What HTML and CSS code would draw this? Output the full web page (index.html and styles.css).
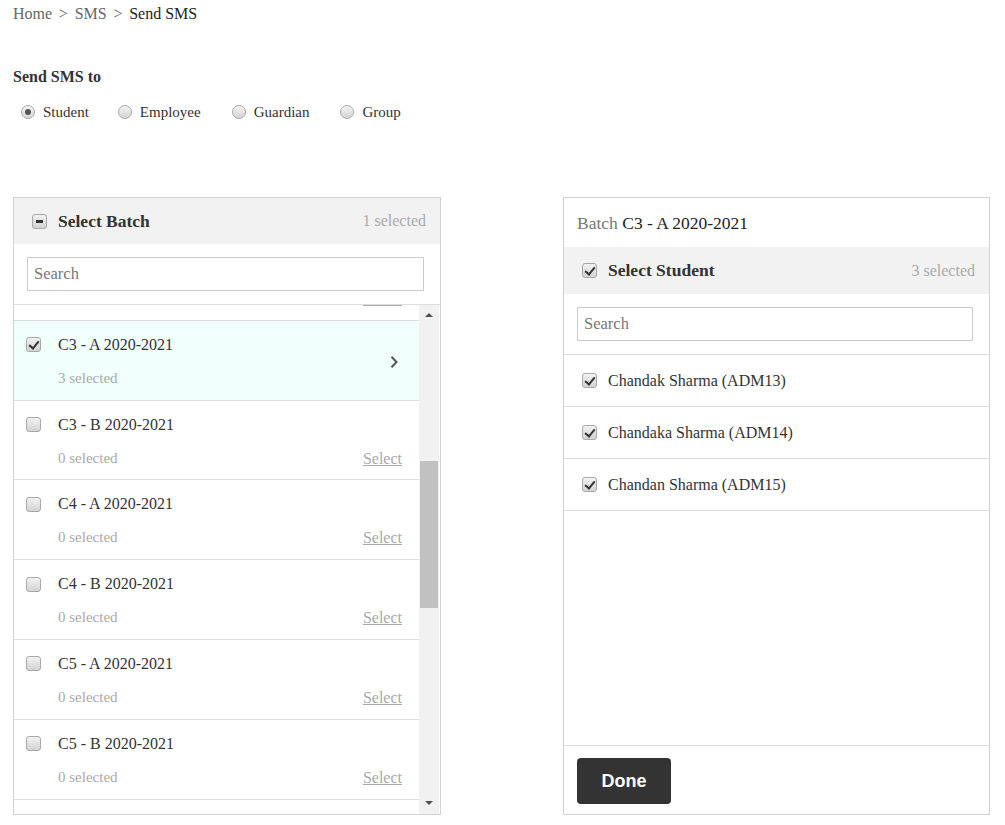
FILE: index.html
```html
<!DOCTYPE html>
<html>
<head>
<meta charset="utf-8">
<title>Send SMS</title>
<link rel="stylesheet" href="styles.css">
</head>
<body>
<div class="page">
  <div class="crumbs"><span class="crumb">Home</span><span class="sep">&gt;</span><span class="crumb">SMS</span><span class="sep">&gt;</span><span class="current">Send SMS</span></div>

  <div class="send-to">Send SMS to</div>
  <div class="radios">
    <label class="radio-item"><span class="radio checked"></span>Student</label>
    <label class="radio-item"><span class="radio"></span>Employee</label>
    <label class="radio-item"><span class="radio"></span>Guardian</label>
    <label class="radio-item"><span class="radio"></span>Group</label>
  </div>

  <div class="panels">
    <div class="panel left">
      <div class="band">
        <span class="cb minus"></span>
        <span class="band-title">Select Batch</span>
        <span class="band-count">1 selected</span>
      </div>
      <div class="search-wrap"><input class="search" placeholder="Search"></div>
      <div class="list-area">
        <div class="list-clip">
          <div class="list">
            <div class="row"><span class="cb"></span><span class="r-title">C2 - B 2020-2021</span><span class="r-sub">0 selected</span><a class="r-link">Select</a></div>
            <div class="row active"><span class="cb checked"></span><span class="r-title">C3 - A 2020-2021</span><span class="r-sub">3 selected</span><span class="chev"><svg width="10" height="14" viewBox="0 0 10 14"><path d="M2.5 1.8 L7.5 7 L2.5 12.2" fill="none" stroke="#555" stroke-width="2"/></svg></span></div>
            <div class="row"><span class="cb"></span><span class="r-title">C3 - B 2020-2021</span><span class="r-sub">0 selected</span><a class="r-link">Select</a></div>
            <div class="row"><span class="cb"></span><span class="r-title">C4 - A 2020-2021</span><span class="r-sub">0 selected</span><a class="r-link">Select</a></div>
            <div class="row"><span class="cb"></span><span class="r-title">C4 - B 2020-2021</span><span class="r-sub">0 selected</span><a class="r-link">Select</a></div>
            <div class="row"><span class="cb"></span><span class="r-title">C5 - A 2020-2021</span><span class="r-sub">0 selected</span><a class="r-link">Select</a></div>
            <div class="row"><span class="cb"></span><span class="r-title">C5 - B 2020-2021</span><span class="r-sub">0 selected</span><a class="r-link">Select</a></div>
            <div class="row"><span class="cb"></span><span class="r-title">C6 - A 2020-2021</span><span class="r-sub">0 selected</span><a class="r-link">Select</a></div>
          </div>
        </div>
        <div class="scrollbar">
          <div class="arrow up"></div>
          <div class="track">
            <div class="thumb"></div>
          </div>
          <div class="arrow down"></div>
        </div>
      </div>
    </div>

    <div class="panel right">
      <div class="batch-title"><span class="muted">Batch</span> C3 - A 2020-2021</div>
      <div class="band">
        <span class="cb checked"></span>
        <span class="band-title">Select Student</span>
        <span class="band-count">3 selected</span>
      </div>
      <div class="search-wrap"><input class="search" placeholder="Search"></div>
      <div class="students">
        <div class="srow"><span class="cb checked"></span>Chandak Sharma (ADM13)</div>
        <div class="srow"><span class="cb checked"></span>Chandaka Sharma (ADM14)</div>
        <div class="srow"><span class="cb checked"></span>Chandan Sharma (ADM15)</div>
      </div>
      <div class="footer"><button class="done">Done</button></div>
    </div>
  </div>
</div>
</body>
</html>
```

FILE: styles.css
```css
* { box-sizing: border-box; }
html, body { margin: 0; padding: 0; background: #fff; }
body {
  font-family: "Liberation Serif", "Times New Roman", serif;
  color: #333;
  font-size: 16px;
}
.page { padding: 5px 15px 0 13px; }

.crumbs { line-height: 18px; font-size: 16px; color: #666; }
.crumbs .sep { margin: 0 6.75px; }
.crumbs .current { color: #222; }

.send-to {
  margin-top: 45px;
  font-weight: bold;
  font-size: 16px;
  line-height: 18px;
  color: #333;
}
.radios {
  display: flex;
  margin-top: 17px;
  padding-left: 8px;
  line-height: 18px;
  font-size: 15px;
}
.radio-item {
  display: flex;
  align-items: center;
  margin-right: 29px;
  color: #333;
}
.radio-item:nth-child(2) { margin-right: 31px; }
.radio-item:nth-child(3) { margin-right: 31px; }
.radio {
  width: 14px; height: 14px;
  border-radius: 50%;
  border: 1px solid #a8a8a8;
  background: linear-gradient(#f4f4f4, #d4d4d4);
  margin-right: 8px;
  position: relative;
}
.radio.checked::after {
  content: "";
  position: absolute;
  left: 3px; top: 3px;
  width: 6px; height: 6px;
  border-radius: 50%;
  background: #555;
}

.panels {
  display: flex;
  gap: 122px;
  margin-top: 76px;
}
.panel {
  border: 1px solid #d2d2d2;
  height: 618px;
  display: flex;
  flex-direction: column;
}
.panel.left { width: 428px; }
.panel.right { width: 427px; }

.band {
  background: #f2f2f2;
  height: 47px;
  flex: none;
  display: flex;
  align-items: center;
  padding: 0 14px 0 18px;
}
.panel.left .band { height: 46px; }
.band-title {
  font-weight: bold;
  font-size: 17.5px;
  color: #333;
  margin-left: 11px;
  flex: 1;
}
.band-count { color: #aaa; font-size: 16px; }

.cb {
  width: 15px; height: 15px;
  flex: none;
  border: 1px solid #a9a9a9;
  border-radius: 3px;
  background: linear-gradient(#f2f2f2, #d3d3d3);
  position: relative;
  display: inline-block;
}
.cb.minus::after {
  content: "";
  position: absolute;
  left: 3px; top: 5px;
  width: 7px; height: 3px;
  background: #333;
}
.cb.checked::after {
  content: "";
  position: absolute;
  left: 4px; top: 1px;
  width: 4px; height: 8px;
  border-right: 2px solid #333;
  border-bottom: 2px solid #333;
  transform: rotate(40deg);
}

.search-wrap {
  padding: 13px 16px 13px 13px;
  border-bottom: 1px solid #ddd;
  flex: none;
}
.search {
  display: block;
  width: 100%;
  height: 34px;
  border: 1px solid #ccc;
  padding: 0 6px;
  font-family: "Liberation Serif", "Times New Roman", serif;
  font-size: 16.5px;
  color: #333;
  outline: none;
}
.search::placeholder { color: #777; }

.list-area {
  flex: 1;
  display: flex;
  min-height: 0;
}
.list-clip {
  flex: 1;
  overflow: hidden;
}
.list { margin-top: -64px; }
.row {
  display: grid;
  grid-template-columns: 32px 1fr auto;
  grid-template-rows: 20px 20px;
  row-gap: 13px;
  height: 79.8px;
  padding: 14px 17px 12px 12px;
  border-bottom: 1px solid #ddd;
  align-items: center;
}
.row.active { background: #f0fffc; }
.row .cb { grid-column: 1; grid-row: 1; }
.r-title { grid-column: 2; grid-row: 1; font-size: 16px; color: #333; line-height: 20px; }
.r-sub { grid-column: 2; grid-row: 2; color: #aaa; font-size: 15px; line-height: 20px; }
.r-link {
  grid-column: 3; grid-row: 2;
  color: #aaa;
  text-decoration: underline;
  font-size: 16px;
  line-height: 20px;
  margin-top: 2px;
}
.chev {
  grid-column: 3; grid-row: 1 / 3;
  align-self: center;
  display: flex;
  padding-right: 3px;
  margin-top: 1px;
}

.scrollbar {
  width: 20px;
  margin-right: 1px;
  background: #f1f1f1;
  display: flex;
  flex-direction: column;
}
.arrow { height: 20px; position: relative; }
.arrow::after {
  content: "";
  position: absolute;
  left: 6px;
  border-left: 4px solid transparent;
  border-right: 4px solid transparent;
}
.arrow.up::after { top: 8px; border-bottom: 4px solid #505050; }
.arrow.down::after { top: 7px; border-top: 4px solid #505050; }
.track { flex: 1; padding-top: 136px; padding-left: 1px; padding-right: 1px; }
.thumb { height: 147px; background: #c1c1c1; }

.batch-title {
  height: 49px;
  flex: none;
  padding: 15px 13px 0;
  font-size: 17.5px;
  color: #222;
  line-height: 20px;
}
.batch-title .muted { color: #777; }
.panel.right .band { padding-left: 18px; }
.panel.right .band-title { margin-left: 11px; }

.students { flex: 1; }
.srow {
  height: 52px;
  border-bottom: 1px solid #ddd;
  display: flex;
  align-items: center;
  padding-left: 18px;
  font-size: 16px;
  color: #333;
}
.srow .cb { margin-right: 11px; }

.footer {
  border-top: 1px solid #ddd;
  padding: 12px 13px 0;
  height: 69px;
  flex: none;
}
.done {
  width: 94px;
  height: 46px;
  background: #333;
  color: #fff;
  border: none;
  border-radius: 4px;
  font-family: "Liberation Sans", Arial, sans-serif;
  font-weight: bold;
  font-size: 18px;
}
```
